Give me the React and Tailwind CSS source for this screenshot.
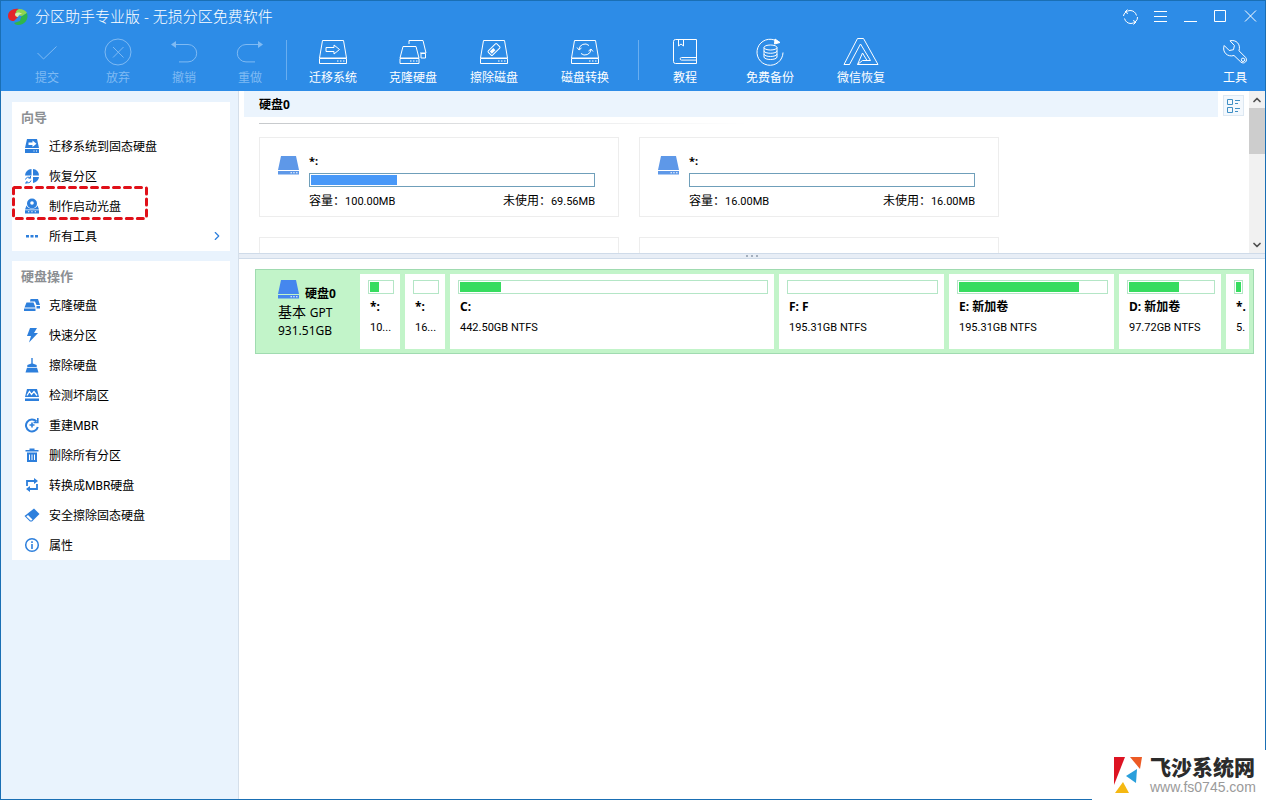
import React from 'react';
import { ChevronDown, ChevronRight, ChevronUp } from 'lucide-react';

/* ---------- toolbar icons ---------- */

const ToolSvg = ({ children }) => (
  <svg width="28" height="28" viewBox="0 0 28 28" fill="none" stroke="currentColor" strokeWidth="1" aria-hidden="true">
    {children}
  </svg>
);

const DiskOutline = () => (
  <>
    <path d="M3.5 2.5h21l3 17.5H.5z" />
    <path d="M.5 20.500h27v5H.5z" />
    <path d="M18 23h1.500M21 23h1.500M24 23h1.500" />
  </>
);

const toolIcons = {
  check: <path d="M4.5 15l6 6L23.500 8.500" />,
  cancel: (
    <>
      <circle cx="14" cy="14" r="13" />
      <path d="M9 9l10.500 10.500M19.500 9L9 19.500" />
    </>
  ),
  undo: (
    <>
      <path d="M5 6.500h13a8.700 8.700 0 010 17.400H9" />
      <path d="M1 6.500l5-3.500v7z" fill="currentColor" stroke="none" />
    </>
  ),
  redo: (
    <>
      <path d="M23 6.500H10a8.700 8.700 0 000 17.400h9" />
      <path d="M27 6.500l-5-3.500v7z" fill="currentColor" stroke="none" />
    </>
  ),
  migrate: (
    <>
      <DiskOutline />
      <path d="M7 9.500h8V7l5.500 4.500L15 16v-2.500H7z" />
    </>
  ),
  clone: (
    <>
      <path d="M4 8.500h13l3 11.500H1z" />
      <path d="M1 20.500h19v5H1z" />
      <path d="M11 23h1.500M14 23h1.500M17 23h1.500" />
      <path d="M10 6V2.500h14L27 15h-6" />
      <path d="M22 15.500h4.500V20H22z" />
    </>
  ),
  wipe: (
    <>
      <DiskOutline />
      <g transform="rotate(-45 14 11.500)">
        <rect x="8" y="8.500" width="12" height="6" rx="1" />
        <rect x="9.500" y="10" width="5" height="3" fill="currentColor" stroke="none" />
      </g>
    </>
  ),
  convert: (
    <>
      <DiskOutline />
      <path d="M8 11.500A6 6 0 0118 7.500M20 11.500A6 6 0 0110 15.500" />
      <path d="M6 9.500l2 2.500 2.500-2M22 13.500L20 11l-2.500 2" />
    </>
  ),
  book: (
    <>
      <path d="M4.500 1.500h21v24h-21a2 2 0 01-2-2v-20a2 2 0 012-2z" />
      <path d="M7.500 1.500V8L10 6l2.500 2V1.500" />
      <path d="M25.500 19.500h-15a1.300 1.300 0 000 2.600h15" />
    </>
  ),
  backup: (
    <>
      <path d="M20.500 3A13 13 0 1027 14.500" />
      <path d="M19 1l5 3.500-5.500 1.500z" fill="currentColor" />
      <ellipse cx="14.500" cy="9.500" rx="6.500" ry="2.500" />
      <path d="M8 9.500v9.500c0 3.300 13 3.300 13 0V9.500M8 12.800c0 3.300 13 3.300 13 0M8 16c0 3.300 13 3.300 13 0" />
    </>
  ),
  restore: (
    <>
      <path d="M-3 26.500L10.500.500h6L31 26.500H10.500l5-11.500 4.500 7.500h3.500L13.500 6 2.500 26.500z" />
      <path d="M-3 26.500h5.500M10.500 26.500l5-4h4.500" />
    </>
  ),
  wrench: (
    <>
      <path d="M9 2.800c6-1.500 11 3.200 9 10l6.500 6.500c3 3.500-1.500 7.500-4.700 4.700L13 17.500C6.500 19.500.8 14 3.200 7.500l5 5 4.300-.8.900-4.200z" />
      <circle cx="22" cy="21.800" r="1.700" />
    </>
  ),
};

const ToolButton = ({ icon, label, disabled, className }) => (
  <button
    type="button"
    disabled={disabled}
    className={`flex shrink-0 flex-col items-center gap-1 [&_svg]:overflow-visible ${disabled ? 'text-[#7fbaf3]' : 'text-white'} ${className}`}
  >
    <ToolSvg>{toolIcons[icon]}</ToolSvg>
    <span className="text-xs leading-4 whitespace-nowrap">{label}</span>
  </button>
);

const historyTools = [
  { icon: 'check', label: '提交', className: 'w-[76px]' },
  { icon: 'cancel', label: '放弃', className: 'w-[66px]' },
  { icon: 'undo', label: '撤销', className: 'w-[66px]' },
  { icon: 'redo', label: '重做', className: 'w-[66px]' },
];

const diskTools = [
  { icon: 'migrate', label: '迁移系统', className: 'w-20' },
  { icon: 'clone', label: '克隆硬盘', className: 'w-20' },
  { icon: 'wipe', label: '擦除磁盘', className: 'w-[82px]' },
  { icon: 'convert', label: '磁盘转换', className: 'w-[100px]' },
];

const helpTools = [
  { icon: 'book', label: '教程', className: 'w-20' },
  { icon: 'backup', label: '免费备份', className: 'w-[90px]' },
  { icon: 'restore', label: '微信恢复', className: 'w-[92px]' },
];

const Separator = () => <div className="mt-0.5 mr-1.5 ml-[3px] h-10 w-px bg-[#69aef0]" />;

/* ---------- title bar ---------- */

const AppLogo = () => (
  <svg width="22" height="18" viewBox="0 0 22 18" className="mt-0.5" aria-hidden="true">
    <path d="M1 8C1 3 6 0 12 1L8 6l3 3-4 4C3 13 1 11 1 8z" fill="#e3242b" />
    <path d="M12 1c4 0 7 2 8 4l-5 3-6-1c-1-2 0-5 3-6z" fill="#8fd64e" />
    <path d="M20 5c2 6-2 12-9 12-2 0-3-1-4-2l6-2 1-4z" fill="#2fb64a" />
    <path d="M8 6c2-2 5-2 7 0-2-.5-3 .5-4 3-2 0-3-1-3-3z" fill="#d9ecb0" />
  </svg>
);

const windowButtons = [
  { label: '刷新', d: 'M1.500 8A7 6 0 018 2.500c3 0 5.500 1.500 6.500 5M15.500 9A7 6 0 019 15.500c-3 0-5.500-1.500-6.500-5M5.500 1.500L3 4l3 1.500M11.500 16.500L14 14l-3-1.500' },
  { label: '菜单', d: 'M2 3.500h13M2 8.500h13M2 13.500h13' },
  { label: '最小化', d: 'M2 13.500h13' },
  { label: '最大化', d: 'M2.500 2.500h11v11h-11z' },
  { label: '关闭', d: 'M3 2.500l11 11M14 2.500l-11 11' },
];

const Header = () => (
  <header className="shrink-0 bg-[#2d8ce7]">
    <div className="flex h-[30px] items-center">
      <div className="flex flex-1 items-center gap-1.5 pl-1.5">
        <AppLogo />
        <h1 className="text-[15px] leading-5 font-light text-white">分区助手专业版 - 无损分区免费软件</h1>
      </div>
      {windowButtons.map((b) => (
        <button key={b.label} type="button" aria-label={b.label} className="flex h-full w-[30px] items-center justify-center text-white">
          <svg width="17" height="17" viewBox="0 0 17 17" fill="none" stroke="currentColor" aria-hidden="true">
            <path d={b.d} />
          </svg>
        </button>
      ))}
    </div>
    <div className="flex h-[60px] items-start pt-[7px] pl-2">
      {historyTools.map((t) => <ToolButton key={t.label} {...t} disabled />)}
      <Separator />
      {diskTools.map((t) => <ToolButton key={t.label} {...t} />)}
      <Separator />
      {helpTools.map((t) => <ToolButton key={t.label} {...t} />)}
      <ToolButton icon="wrench" label="工具" className="ml-auto w-[60px]" />
    </div>
  </header>
);

/* ---------- sidebar ---------- */

const sideIcons = {
  ssd: (
    <>
      <path d="M3 1h10l2 9H1zM1 11h14v4H1z" />
      <path d="M4.500 4.500h4V2.500l4 3.300-4 3.200V7h-4z" fill="#fff" />
      <path d="M9.500 12.500h1v1h-1zM12 12.500h1v1h-1z" fill="#fff" />
    </>
  ),
  pie: (
    <>
      <path d="M7.500 1v6.500H1A6.500 6.500 0 017.500 1zM9 1a6.500 6.500 0 016 6.500H9zM9 9h6a6.500 6.500 0 01-6 6z" />
      <path d="M1.500 11.500a3 3 0 015-1.500M7 12.500a3 3 0 01-5 1.500M6.500 8v2.200H4.500M2 16v-2h2" fill="none" stroke="#2d7fdc" />
    </>
  ),
  disc: (
    <>
      <circle cx="8" cy="5.500" r="5" />
      <circle cx="8" cy="5" r="1.800" fill="#fff" />
      <path d="M2.500 7.500L1 11.500h14l-1.500-4-1 1.500c-2.500 2.300-6.500 2.300-9 0zM1 12.300h14v3.200H1z" />
      <path d="M4 13.300h1.300v1H4zM7.300 13.300h1.300v1H7.300zM10.700 13.300H12v1h-1.300z" fill="#fff" />
    </>
  ),
  dots: <path d="M2 7h3v2.500H2zM6.500 7h3v2.500h-3zM11 7h3v2.500h-3z" />,
  clone: (
    <>
      <path d="M2.500 5.500h7l2 5H.5zM0 11.500h11.500V14H0z" />
      <path d="M6.500 2h7.500l2 6h-3.500L11 4.500H6zM12.500 9H16v2.500h-3.500z" />
    </>
  ),
  bolt: <path d="M6 1h7l-3 5h4L5 15.500 7 9H3z" />,
  broom: <path d="M7.300 1h1.400v5.500l4 1.500v2H3.300V8l4-1.500zM3 10.700h10l1.500 4.800h-13z" />,
  scan: (
    <>
      <path d="M3 2h10l2 8H1zM1 11.500h14V14H1z" />
      <path d="M3 8.500l2.500-4 2 3L10 4.500l3 4" fill="none" stroke="#fff" strokeWidth="1.300" />
    </>
  ),
  rebuild: (
    <g fill="none" stroke="#2d7fdc" strokeWidth="2">
      <path d="M12.500 4.500a6 6 0 101.300 5.500" />
      <path d="M13.800 1v4.500H9.500M8 5.500v5M5.500 8h5" strokeWidth="1.600" />
    </g>
  ),
  trash: (
    <>
      <path d="M1.500 3h4V1.500h5V3h4v1.500h-13zM3 5.500h10V15H3z" />
      <path d="M5.500 7.500v5.500M8 7.500v5.500M10.500 7.500v5.500" stroke="#fff" fill="none" />
    </>
  ),
  swap: (
    <>
      <path d="M3 9V4h8M13 7v5H5" fill="none" stroke="#2d7fdc" strokeWidth="1.800" />
      <path d="M10 1l4 3-4 3zM6 9l-4 3 4 3z" />
    </>
  ),
  eraser: (
    <>
      <path d="M10 1.500l5.500 5.500-7.500 7.500H6L.5 9z" />
      <path d="M4 8l4.500 4.500L7.500 13.500h-1L2.300 9.500z" fill="#fff" />
    </>
  ),
  info: (
    <>
      <circle cx="8" cy="8" r="6.300" fill="none" stroke="#2d7fdc" strokeWidth="1.500" />
      <path d="M7.200 4.300h1.600V6H7.200zM7.200 7h1.600v5H7.200z" />
    </>
  ),
};

const wizardItems = [
  { icon: 'ssd', label: '迁移系统到固态硬盘' },
  { icon: 'pie', label: '恢复分区' },
  { icon: 'disc', label: '制作启动光盘', marked: true },
  { icon: 'dots', label: '所有工具', more: true },
];

const diskItems = [
  { icon: 'clone', label: '克隆硬盘' },
  { icon: 'bolt', label: '快速分区' },
  { icon: 'broom', label: '擦除硬盘' },
  { icon: 'scan', label: '检测坏扇区' },
  { icon: 'rebuild', label: '重建MBR' },
  { icon: 'trash', label: '删除所有分区' },
  { icon: 'swap', label: '转换成MBR硬盘' },
  { icon: 'eraser', label: '安全擦除固态硬盘' },
  { icon: 'info', label: '属性' },
];

const SidePanel = ({ title, items }) => (
  <section className="bg-white">
    <h2 className="h-[29px] pt-[5px] pl-[9px] text-[13px] leading-5 font-bold text-[#8c8f93]">{title}</h2>
    <ul>
      {items.map((item) => (
        <li key={item.label} className="relative">
          <button type="button" className="flex h-[30px] w-full items-center pr-1.5 pl-3 text-left">
            <svg width="16" height="16" viewBox="0 0 16 16" fill="#2d7fdc" aria-hidden="true">
              {sideIcons[item.icon]}
            </svg>
            <span className="ml-[9px] flex-1 pt-0.5 font-['Roboto','Noto_Sans_CJK_SC',sans-serif] text-xs text-black">{item.label}</span>
            {item.more && <ChevronRight size={14} strokeWidth={2} className="text-[#2d7fdc]" />}
          </button>
          {item.marked && (
            <svg width="138" height="36" className="pointer-events-none absolute -top-1.5 -left-px" fill="none" aria-hidden="true">
              <rect x="2.500" y="2.500" width="133" height="31" rx="1" stroke="#e01019" strokeWidth="3" strokeDasharray="6 5" strokeLinecap="round" />
            </svg>
          )}
        </li>
      ))}
    </ul>
  </section>
);

/* ---------- main area ---------- */

const DiskIcon = ({ className }) => (
  <svg width="21" height="19" viewBox="0 0 21 19" className={className} fill="currentColor" aria-hidden="true">
    <path d="M3 0h15l3 14H0zM0 15h21v3.500H0z" />
    <path d="M12.500 16.200h1.500v1h-1.500zM15.200 16.200h1.500v1h-1.500zM18 16.200h1.500v1H18z" fill="#fff" />
  </svg>
);

const volumes = [
  { name: '*:', total: '100.00MB', free: '69.56MB', used: 30.4 },
  { name: '*:', total: '16.00MB', free: '16.00MB', used: 0 },
];

const VolumeCard = ({ name, total, free, used }) => (
  <article className="flex h-20 w-[360px] shrink-0 gap-2.5 border border-[#ededed] pt-[15px] pr-[23px] pl-[18px]">
    <DiskIcon className="mt-[3px] shrink-0 text-[#5e98e8]" />
    <div className="flex-1 text-black">
      <p className="text-[11px] leading-4 font-bold">{name}</p>
      <div className="mt-1 h-3.5 border border-[#6f9fba] bg-white p-px">
        <div className="h-full bg-[#4898f8]" style={{ width: `${used}%` }} />
      </div>
      <div className="mt-1.5 flex justify-between font-['Roboto','Noto_Sans_CJK_SC',sans-serif] text-xs leading-4">
        <p>容量：<span className="text-[11px]">{total}</span></p>
        <p>未使用：<span className="text-[11px]">{free}</span></p>
      </div>
    </div>
  </article>
);

// weight is the relative width on the disk map
const partitions = [
  { id: 'efi', name: '*:', size: '10...', weight: 40, used: 40 },
  { id: 'msr', name: '*:', size: '16...', weight: 40, used: 0 },
  { id: 'c', name: 'C:', size: '442.50GB NTFS', weight: 324, used: 13.5 },
  { id: 'f', name: 'F: F', size: '195.31GB NTFS', weight: 165, used: 0 },
  { id: 'e', name: 'E: 新加卷', size: '195.31GB NTFS', weight: 165, used: 81.5 },
  { id: 'd', name: 'D: 新加卷', size: '97.72GB NTFS', weight: 102, used: 60 },
  { id: 'rec', name: '*.', size: '5.', weight: 23, used: 100 },
];

const Partition = ({ name, size, weight, used }) => (
  <div className="min-w-0 basis-0 bg-white" style={{ flexGrow: weight }}>
    <div className="pt-1.5 pr-1.5 pl-2">
      <div className="h-3.5 border border-[#b4e6c6] p-px">
        <div className="h-full bg-[#36dc5f]" style={{ width: `${used}%` }} />
      </div>
      <p className="mt-[5px] pl-0.5 text-xs leading-4 font-bold whitespace-nowrap">{name}</p>
      <p className="mt-[5px] pl-0.5 font-['Roboto',sans-serif] text-[11px] leading-4 whitespace-nowrap">{size}</p>
    </div>
  </div>
);

const DiskList = () => (
  <section className="flex h-[162px] shrink-0 overflow-hidden">
    <div className="min-w-0 flex-1">
      <div className="ml-[5px] flex h-[26px] items-center bg-[#ebf4fd] pt-0.5 pl-[15px]">
        <h2 className="text-xs font-bold text-black">硬盘0</h2>
      </div>
      <div className="mt-1.5 ml-5 h-px w-1/2 bg-linear-to-r from-[#c6c9cc] to-white" />
      <div className="mt-[13px] ml-5 flex flex-wrap gap-5">
        {volumes.map((v) => <VolumeCard key={v.total} {...v} />)}
        <div className="h-20 w-[360px] border border-[#ededed]" />
        <div className="h-20 w-[360px] border border-[#ededed]" />
      </div>
    </div>
    <button type="button" aria-label="视图" className="mx-[5px] mt-1 flex h-[21px] w-[21px] items-center justify-center border border-[#dde8f2] bg-[#f3f8fd]">
      <svg width="13" height="14" viewBox="0 0 13 14" fill="none" stroke="#3f8fc4" aria-hidden="true">
        <path d="M.5.500h5v5h-5zM.5 8.500h5v5h-5zM8 1.500h5M8 4.500h3M8 9.500h5M8 12.500h3" />
      </svg>
    </button>
    <div className="flex w-4 shrink-0 flex-col bg-[#f1f1f1]">
      <button type="button" aria-label="向上" className="flex h-[17px] items-center justify-center text-[#505050]">
        <ChevronUp size={12} strokeWidth={3.5} />
      </button>
      <div className="h-[46px] bg-[#cdcdcd]" />
      <button type="button" aria-label="向下" className="mt-auto flex h-[17px] items-center justify-center text-[#505050]">
        <ChevronDown size={12} strokeWidth={3.5} />
      </button>
    </div>
  </section>
);

const DiskMap = () => (
  <section className="mt-2.5 mr-[11px] ml-4 flex h-[85px] gap-[5px] border border-[#a0dbb0] bg-[#c2f4c9] p-1">
    <div className="w-[95px] shrink-0 pt-1.5 pl-[18px] text-black">
      <div className="flex items-start gap-1.5">
        <DiskIcon className="shrink-0 text-[#4587ee]" />
        <h2 className="pt-1 text-xs leading-5 font-bold whitespace-nowrap">硬盘0</h2>
      </div>
      <p className="text-sm leading-4 whitespace-nowrap">基本 <span className="text-xs">GPT</span></p>
      <p className="text-xs leading-5">931.51GB</p>
    </div>
    {partitions.map((p) => <Partition key={p.id} {...p} />)}
  </section>
);

const SiteMark = () => (
  <a href="#site" className="absolute -right-px -bottom-px flex h-[50px] w-[174px] items-center gap-1.5 bg-white pl-[22px]">
    <svg width="30" height="40" viewBox="0 0 30 40" className="shrink-0" aria-hidden="true">
      <path d="M0 2h11L0 30z" fill="#dd1322" />
      <path d="M16 2h12l-2 12z" fill="#ec5a24" />
      <path d="M12 21l11-7-1 14z" fill="#2a9fdb" />
      <path d="M1 38l8-11 6 11z" fill="#f5b812" />
    </svg>
    <span className="flex flex-col">
      <span className="text-[21px] leading-6 font-black whitespace-nowrap text-[#2b2b2b]">飞沙系统网</span>
      <span className="font-['Liberation_Sans',sans-serif] text-sm leading-4 text-[#9a9a9a]">www.fs0745.com</span>
    </span>
  </a>
);

const App = () => (
  <div className="relative flex h-screen flex-col border border-[#1a6fb4] bg-white font-['Noto_Sans','Noto_Sans_CJK_SC',sans-serif]">
    <Header />
    <div className="flex min-h-0 flex-1">
      <aside className="flex w-[238px] shrink-0 flex-col gap-2.5 border-r border-[#d5dfea] bg-[#e9f3fd] pt-[11px] pr-2 pl-[11px]">
        <SidePanel title="向导" items={wizardItems} />
        <SidePanel title="硬盘操作" items={diskItems} />
      </aside>
      <main className="flex min-w-0 flex-1 flex-col">
        <DiskList />
        <div className="flex h-1.5 shrink-0 items-center justify-center gap-[3px] border-y border-[#cfdbe9] bg-[#e8eef6]">
          <i className="h-0.5 w-0.5 bg-[#a4afbd]" />
          <i className="h-0.5 w-0.5 bg-[#a4afbd]" />
          <i className="h-0.5 w-0.5 bg-[#a4afbd]" />
        </div>
        <DiskMap />
      </main>
    </div>
    <SiteMark />
  </div>
);

export default App;
